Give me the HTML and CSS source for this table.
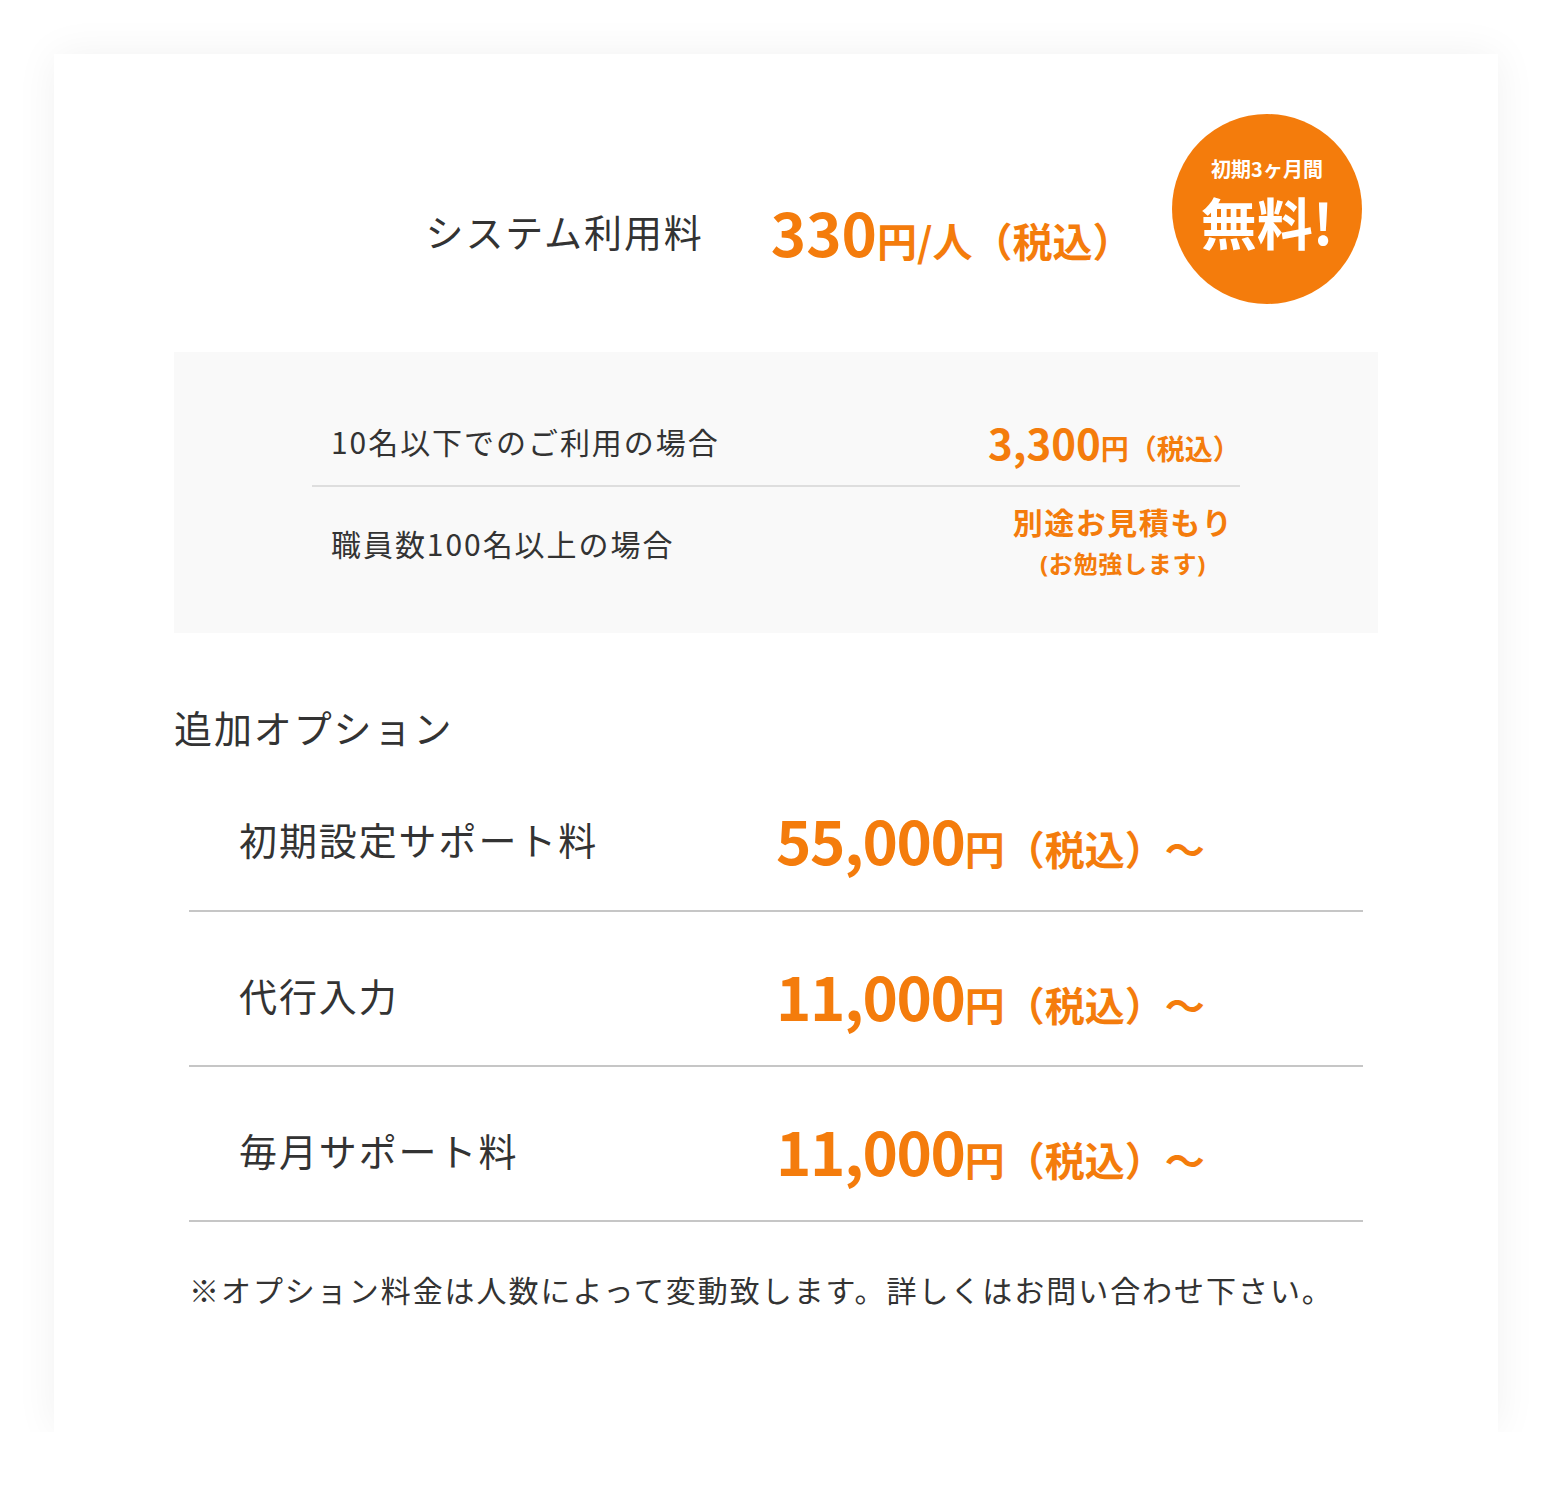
FILE: index.html
```html
<!DOCTYPE html>
<html lang="ja">
<head>
<meta charset="utf-8">
<title>料金</title>
<link rel="stylesheet" href="styles.css">
</head>
<body>
<div class="card">
  <div class="main">
    <div class="main-row">
      <span class="main-label">システム利用料</span>
      <span class="main-price"><span class="main-num">330</span><span class="main-unit">円/人（税込）</span></span>
    </div>
    <div class="badge">
      <span class="badge-sub">初期3ヶ月間</span>
      <span class="badge-main">無料!</span>
    </div>
  </div>

  <div class="tiers">
    <div class="tier-table">
      <div class="tier">
        <div class="tier-label">10名以下でのご利用の場合</div>
        <div class="tier-price"><span class="tier-num">3,300</span><span class="tier-unit">円（税込）</span></div>
      </div>
      <div class="tier">
        <div class="tier-label">職員数100名以上の場合</div>
        <div class="tier-price tier-price-quote">
          <div class="quote">別途お見積もり</div>
          <div class="quote-sub"><span class="paren">(</span>お勉強します<span class="paren">)</span></div>
        </div>
      </div>
    </div>
  </div>

  <h2 class="opt-title">追加オプション</h2>
  <div class="opts">
    <div class="opt">
      <div class="opt-label">初期設定サポート料</div>
      <div class="opt-price"><span class="opt-num">55,000</span><span class="opt-unit">円（税込）～</span></div>
    </div>
    <div class="opt">
      <div class="opt-label">代行入力</div>
      <div class="opt-price"><span class="opt-num">11,000</span><span class="opt-unit">円（税込）～</span></div>
    </div>
    <div class="opt">
      <div class="opt-label">毎月サポート料</div>
      <div class="opt-price"><span class="opt-num">11,000</span><span class="opt-unit">円（税込）～</span></div>
    </div>
  </div>
  <p class="note">※オプション料金は人数によって変動致します。詳しくはお問い合わせ下さい。</p>
</div>
</body>
</html>
```

FILE: styles.css
```css
* { box-sizing: border-box; }
html, body { margin: 0; padding: 0; background: #fff; }
body {
  font-family: "Noto Sans CJK JP", "Noto Sans", sans-serif;
  color: #333;
  padding: 54px 0 0 54px;
}
.card {
  width: 1444px;
  background: #fff;
  box-shadow: 0 0 40px rgba(0, 0, 0, 0.06);
  padding: 0 120px 120px;
}
.main {
  position: relative;
  padding-top: 147px;
}
.main-row {
  display: flex;
  justify-content: center;
  align-items: center;
  gap: 67px;
  padding-left: 6px;
  line-height: 1;
}
.main-label { font-size: 38px; letter-spacing: 0.05em; }
.main-price { color: #f47c0c; font-weight: 700; white-space: nowrap; }
.main-num { font-size: 60px; }
.main-unit { font-size: 40px; }
.badge {
  position: absolute;
  top: 60px;
  right: 16px;
  width: 190px;
  height: 190px;
  border-radius: 50%;
  background: #f47c0c;
  color: #fff;
  font-weight: 700;
  display: flex;
  flex-direction: column;
  align-items: center;
  justify-content: center;
  gap: 12px;
  padding-bottom: 12px;
}
.badge-sub { font-size: 20px; line-height: 1.2; }
.badge-main { font-size: 56px; line-height: 1; }

.tiers {
  margin-top: 91px;
  background: #f9f9f9;
  padding: 48px 0 35px;
}
.tier-table {
  width: 928px;
  margin: 0 auto;
}
.tier {
  display: flex;
  align-items: center;
}
.tier + .tier { border-top: 2px solid #dedede; }
.tier:first-child { height: 85px; padding-bottom: 3px; }
.tier:last-child { height: 113px; }
.tier-label {
  flex: 1;
  min-width: 0;
  padding-left: 19px;
  font-size: 30px;
  letter-spacing: 0.065em;
  line-height: 1.2;
  white-space: nowrap;
}
.tier-price {
  flex: 0 0 252px;
  width: 252px;
  text-align: center;
  color: #f47c0c;
  font-weight: 700;
  white-space: nowrap;
}
.tier-price-quote { padding-left: 18px; }
.tier-num { font-size: 42px; }
.tier-unit { font-size: 28px; }
.quote { font-size: 30px; line-height: 1.4; letter-spacing: 0.05em; }
.quote-sub {
  font-size: 24px;
  line-height: 1.75;
  letter-spacing: 0.03em;
  text-autospace: no-autospace;
}
.paren { font-family: "Noto Sans", "Liberation Sans", sans-serif; }

.opt-title {
  margin: 65px 0 0;
  font-size: 38px;
  font-weight: 400;
  line-height: 1.5;
  letter-spacing: 0.05em;
}
.opts { margin: 0 15px; }
.opt {
  display: grid;
  grid-template-columns: 587px 1fr;
  align-items: center;
  height: 155px;
  padding-top: 12px;
  border-bottom: 2px solid #c6c6c6;
}
.opts .opt:first-child { height: 157px; }
.opt-label {
  padding-left: 50px;
  font-size: 38px;
  line-height: 1;
  letter-spacing: 0.05em;
}
.opt-price {
  color: #f47c0c;
  font-weight: 700;
  line-height: 1;
  white-space: nowrap;
}
.opt-num { font-size: 60px; letter-spacing: -1.3px; }
.opt-unit { font-size: 40px; }
.note {
  margin: 45px 0 0 15px;
  font-size: 30px;
  line-height: 1.5;
  letter-spacing: 0.065em;
}
```
